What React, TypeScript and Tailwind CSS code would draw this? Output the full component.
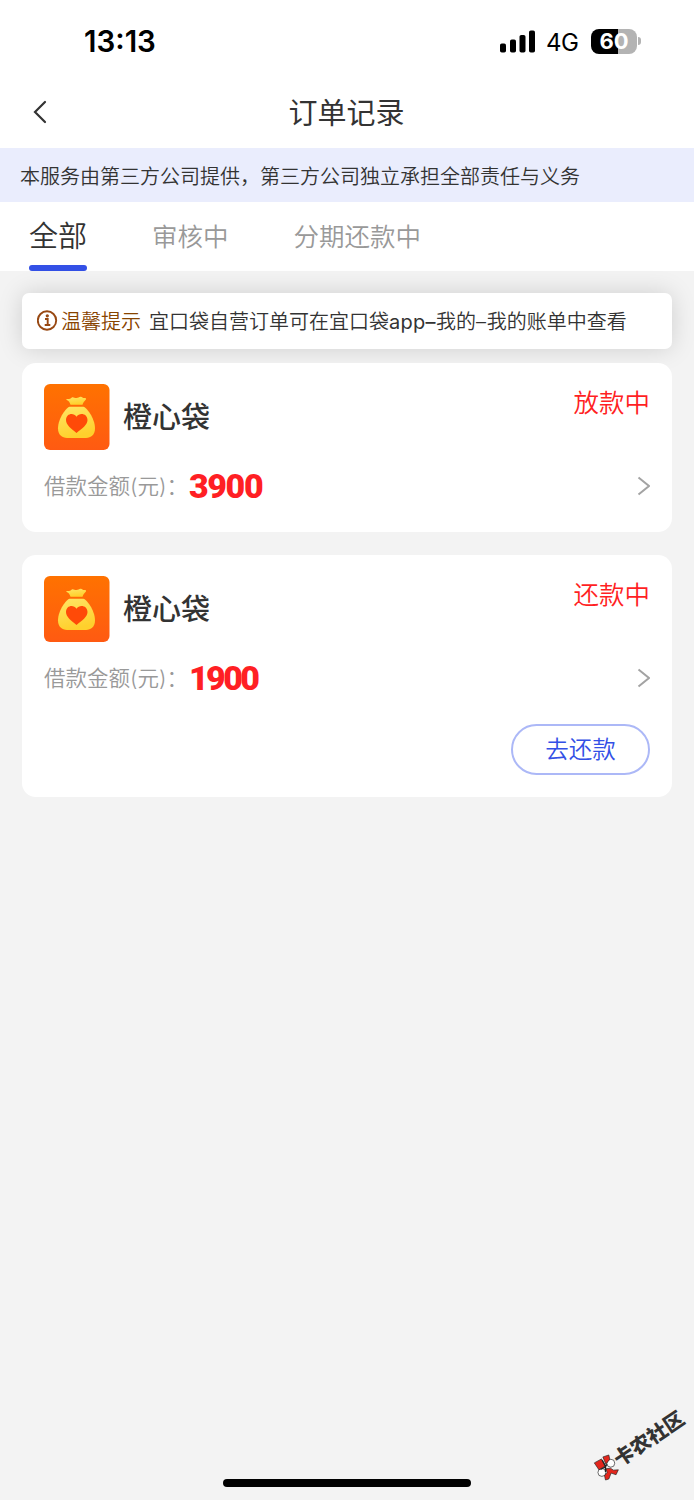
import React from 'react';

interface Order {
  id: number;
  name: string;
  status: string;
  amount: string;
  canRepay: boolean;
}

const orders: Order[] = [
  { id: 1, name: '橙心袋', status: '放款中', amount: '3900', canRepay: false },
  { id: 2, name: '橙心袋', status: '还款中', amount: '1900', canRepay: true },
];

function StatusBar() {
  return (
    <div className="flex h-[77px] items-center justify-between pt-[6px] pr-[53px] pl-[84px]">
      <span className="font-['Inter'] text-[29.500px] leading-none font-semibold text-black">13:13</span>
      <div className="flex items-center">
        <svg className="h-[24px] w-[36px]" viewBox="0 0 36 24">
          <rect x="0" y="13.500" width="6" height="9" rx="1.8" />
          <rect x="10" y="9.500" width="6" height="13" rx="1.8" />
          <rect x="19.5" y="5" width="6" height="17.5" rx="1.8" />
          <rect x="29" y="0.500" width="6" height="22" rx="1.8" />
        </svg>
        <span className="mt-[2px] ml-[10px] w-[34px] font-['Inter'] text-[24px] leading-none tracking-[-0.5px] text-black">4G</span>
        <div className="mb-px ml-[11px] flex items-center">
          <div className="flex h-[25px] w-[46px] items-center justify-center rounded-[8px] bg-linear-to-r from-black from-59% to-[#b3b3b3] to-59%">
            <span className="font-['Inter'] text-[22px] leading-none font-bold text-white">60</span>
          </div>
          <div className="ml-[1px] h-[8px] w-[3px] rounded-r-full bg-[#b3b3b3]" />
        </div>
      </div>
    </div>
  );
}

function BagLogo({ id }: { id: number }) {
  return (
    <svg className="h-[66px] w-[66px]" viewBox="0 0 66 66">
      <defs>
        <linearGradient id={`bg-${id}`} x1="0" y1="0" x2="0" y2="1">
          <stop offset="0" stopColor="#ff7200" />
          <stop offset="1" stopColor="#ff5a12" />
        </linearGradient>
        <linearGradient id={`bag-${id}`} x1="0" y1="0" x2="0.3" y2="1">
          <stop offset="0" stopColor="#ffe566" />
          <stop offset="1" stopColor="#ffd02c" />
        </linearGradient>
      </defs>
      <rect width="65.5" height="66" rx="6" fill={`url(#bg-${id})`} />
      <path
        d="M23 15c2 .3 3.500-.4 4.800-1.500 1.500-1 3 .8 4.700.6 1.700-.2 2.700-1.600 4.300-1.400 1.700.2 2 1.700 4 1.300 1.200-.2 1.700.9.900 1.800-1.500 1.500-2.500 3-3.200 5H26.500c-.6-2.300-1.800-3.900-3.800-4.800-.6-.4-.3-1 .3-1z"
        fill={`url(#bag-${id})`}
      />
      <path
        d="M25.500 22.800h14C42 23 51 34 51 44.500c0 6-4 9.500-9 9.500H23c-5 0-9-3.500-9-9.500C14 34 23 23 25.500 22.800z"
        fill={`url(#bag-${id})`}
      />
      <path
        d="M32.500 49C27 44.500 22 41 22 36c0-6.500 7.500-8 10.500-3.300C35.500 28 43.500 29.500 43.500 36c0 5-5.500 8.500-11 13z"
        fill="#ff4a08"
      />
    </svg>
  );
}

function OrderCard({ order }: { order: Order }) {
  return (
    <div className={`rounded-[14px] bg-white px-[22px] pt-[21px] ${order.canRepay ? 'h-[242px]' : 'h-[169px]'}`}>
      <div className="flex h-[66px]">
        <BagLogo id={order.id} />
        <h2 className="ml-[13px] flex-1 text-[29px] leading-[67px] font-medium text-[#333]">{order.name}</h2>
        <span className="text-[25.500px] leading-[38px] font-[350] text-[#ff1f24]">{order.status}</span>
      </div>

      <div className="mt-[20px] flex h-[32px] items-center">
        <span className="w-[145px] pt-[2px] text-[21.500px] leading-none font-[350] whitespace-nowrap text-[#999]">借款金额(元)：</span>
        <span
          className={`flex-1 font-['Roboto'] text-[34px] leading-none font-black text-[#ff1f24] ${
            order.amount.startsWith('1') ? 'tracking-[-2.600px]' : 'tracking-[-1.400px]'
          }`}
        >
          {order.amount}
        </span>
        <svg className="h-[20px] w-[13px]" viewBox="0 0 13 20" fill="none" stroke="#a3a3a3" strokeWidth="2">
          <path d="M1.500 1.500L12 10L1.500 18.500" />
        </svg>
      </div>

      {order.canRepay && (
        <div className="mt-[30px] flex justify-end">
          <button className="h-[51px] w-[139px] rounded-full border-2 border-[#acb8f7] text-[23.500px] leading-[45px] font-[350] text-[#3350e6]">
            去还款
          </button>
        </div>
      )}
    </div>
  );
}

function Watermark() {
  return (
    <>
      <svg className="absolute top-[1453px] left-[593px] h-[28px] w-[27px]" viewBox="40 190 80 85" stroke="#222" strokeWidth="2">
        <circle cx="93" cy="221" r="12" fill="#fff" />
        <circle cx="66" cy="249" r="12" fill="#fff" />
        <path d="M43 220l22-12 11 22-19 11zM69 202l18-6 3 13-12 15z" fill="#e3261c" />
        <path d="M78 238l14-2 9 6 15-1-7 15-15-5-7 18-10 3-3-13 8-10z" fill="#e3261c" />
        <path d="M67 212l10 18M62 240l15-8 4-8M77 232v16" fill="none" strokeWidth="4" />
      </svg>
      <span className="absolute top-[1429px] left-[609px] w-[80px] rotate-[-34deg] text-[20px] leading-none font-black whitespace-nowrap text-[#333]">
        卡农社区
      </span>
    </>
  );
}

export default function App() {
  return (
    <div className="relative flex h-[1500px] w-[694px] flex-col overflow-hidden bg-[#f3f3f3] font-['Inter','Noto_Sans_CJK_SC',sans-serif] text-[#333]">
      <header className="bg-white">
        <StatusBar />
        <div className="flex h-[71px] items-center px-[33px]">
          <svg className="mb-[2px] h-[24px] w-[14px]" viewBox="0 0 14 24" fill="none" stroke="#333" strokeWidth="2.200" strokeLinecap="round">
            <path d="M12 2L2 12L12 22" />
          </svg>
          <h1 className="flex-1 pt-[2px] pr-[15px] text-center text-[29px] leading-none">订单记录</h1>
        </div>
      </header>

      <div className="flex h-[54px] items-center bg-[#eaedfd] px-[20px] pt-[3px] text-[20px] leading-none font-[350] whitespace-nowrap">
        本服务由第三方公司提供，第三方公司独立承担全部责任与义务
      </div>

      {/* Tabs */}
      <nav className="flex h-[69px] bg-white pl-[29px] leading-[70px] font-[350] text-[#999]">
        <div className="flex w-[58px] flex-col">
          <span className="h-[63px] text-[29px] text-[#333]">全部</span>
          <span className="h-[6px] rounded-full bg-[#3350e6]" />
        </div>
        <span className="ml-[65px] text-[25.500px]">审核中</span>
        <span className="ml-[65px] text-[25.500px]">分期还款中</span>
      </nav>

      <main className="flex flex-col px-[22px] pt-[22px]">
        {/* Tip */}
        <div className="flex h-[56px] items-center rounded-[7px] bg-white pl-[15px] text-[20px] leading-none font-[350] whitespace-nowrap shadow-[0_0_24px_rgba(0,0,0,0.15)]">
          <svg className="mb-[2px] h-[21px] w-[21px]" viewBox="0 0 21 21" fill="none" stroke="#984812" strokeWidth="1.900">
            <circle cx="10" cy="10.500" r="9.200" />
            <path d="M8 9h2.700v6M7.700 15h5.600" />
            <circle cx="10.300" cy="5.800" r="0.700" fill="#984812" />
          </svg>
          <span className="ml-[3px] pt-[2px] text-[#884400]">温馨提示</span>
          <span className="ml-[8px] pt-[2px]">
            宜口袋自营订单可在宜口袋<span className="font-normal tracking-[0.300px]">app–</span>我的
            <span className="tracking-[0.800px]">–</span>我的账单中查看
          </span>
        </div>

        <div className="relative mt-[14px] flex flex-col gap-[23px]">
          {orders.map((order) => (
            <OrderCard key={order.id} order={order} />
          ))}
        </div>
      </main>

      <Watermark />
      <div className="absolute bottom-[13px] left-[223px] h-[8px] w-[248px] rounded-full bg-black" />
    </div>
  );
}
